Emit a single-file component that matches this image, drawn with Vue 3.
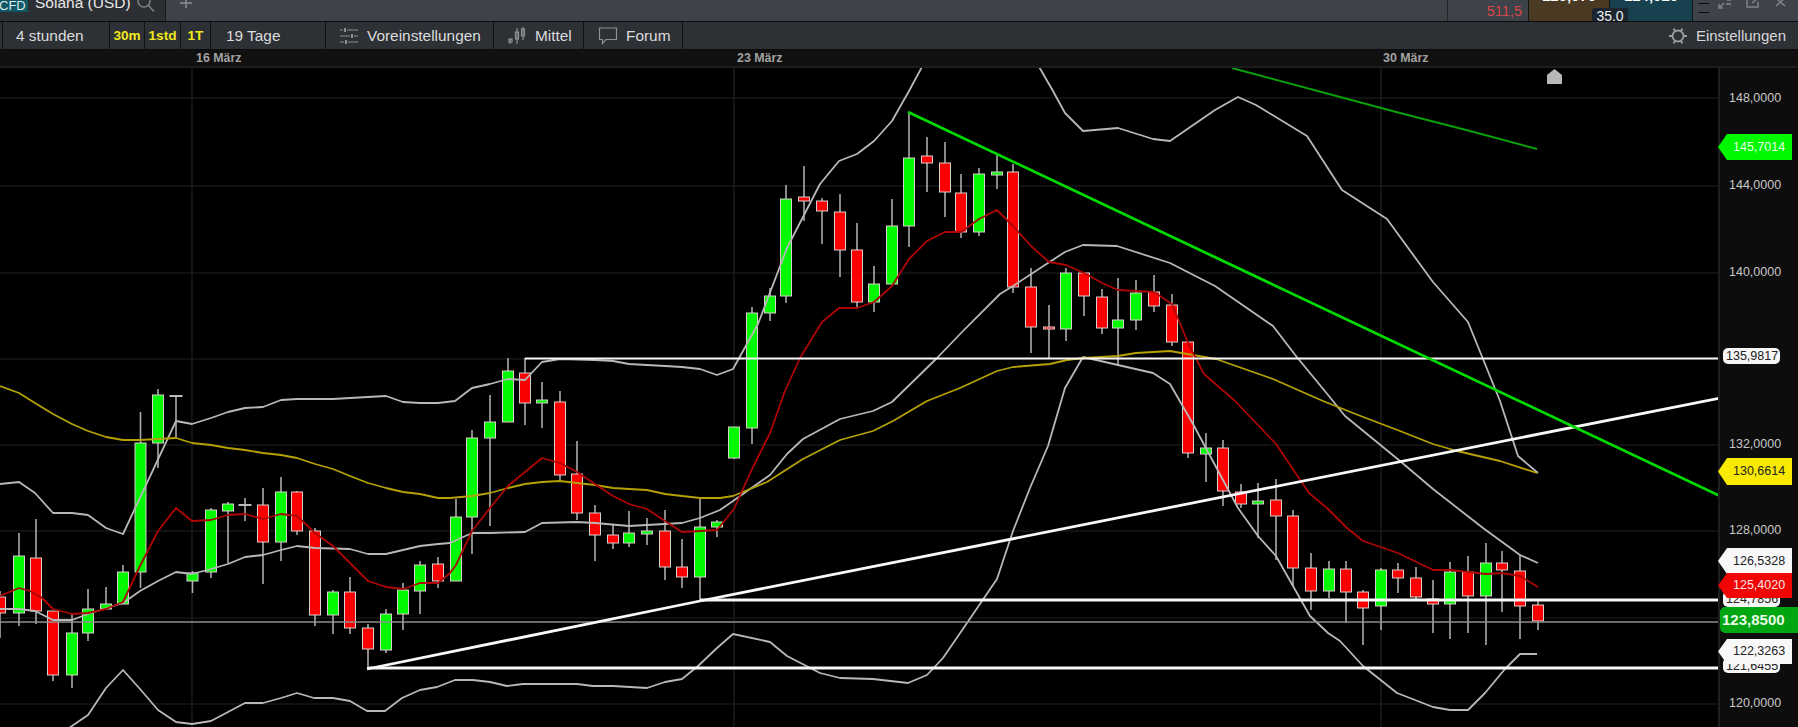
<script setup>
const candleRows = [
  [0,590,637,596,612,'r'],[19,532,625,555,612,'g'],[36,518,623,557,610,'r'],[53,610,680,610,674,'r'],
  [72,613,687,632,674,'g'],[88,588,640,608,632,'g'],[106,586,608,603,608,'g'],[123,564,603,571,603,'g'],
  [140.5,411,587,442,571,'g'],[158,388,467,394,442,'g'],[176,395,437,394.5,395.5,'d'],[192.5,570,592,572,580,'g'],
  [211,507,577,509,571,'g'],[228,501,562,503,510,'g'],[245,497,520,503.5,504.5,'d'],[263,487,583,504,541,'r'],
  [281,476,560,491,541,'g'],[297,490,534,491,530,'r'],[315,527,625,530,614,'r'],[333,589,633,591,614,'g'],
  [350,576,633,591,627,'r'],[368,623,665,627,648,'r'],[386,608,652,613,649,'g'],[403,582,629,589,613,'g'],
  [420,560,613,564,590,'g'],[438,556,587,563,580,'r'],[456,498,580,516,580,'g'],[472,429,553,437,516,'g'],
  [490,394,525,421,437,'g'],[508,357,421,370,421,'g'],[525,357,424,372,402,'r'],[542,381,427,399,402,'g'],
  [560,390,480,401,474,'r'],[577,440,519,473,512,'r'],[595,504,560,512,534,'r'],[613,523,548,534,542,'r'],
  [629,510,546,532,542,'g'],[647,517,544,530,533,'g'],[665,509,579,530,566,'r'],[682,538,587,566,576,'r'],
  [700,497,600,526,576,'g'],[717,519,536,521,526,'g'],[734,426,458,426,457,'g'],[752,306,443,312,427,'g'],
  [770,287,320,295,312,'g'],[786,184,302,198,295,'g'],[804,165,220,196,200,'r'],[822,197,243,200,210,'r'],
  [840,193,276,211,249,'r'],[857,222,308,249,301,'r'],[874,265,311,283,301,'g'],[892,198,283,225,283,'g'],
  [909,112,246,157,225,'g'],[927,136,191,155,162,'r'],[945,141,216,162,191,'r'],[961,173,237,192,231,'r'],
  [979,167,235,173,231,'g'],[997,154,188,171,174,'g'],[1013,163,292,171,286,'r'],[1031,267,352,286,326,'r'],
  [1049,304,357,326,328,'r'],[1066,267,340,272,328,'g'],[1084,272,315,272,295,'r'],[1102,288,333,296,327,'r'],
  [1118,277,365,319,327,'g'],[1136,279,329,292,319,'g'],[1154,274,311,291,305,'r'],[1172,293,345,304,341,'r'],
  [1188,341,457,341,452,'r'],[1206,432,481,447,453,'g'],[1223,439,505,447,490,'r'],[1241,483,507,491,503,'r'],
  [1258,482,537,500,503,'g'],[1276,478,559,499,515,'r'],[1293,509,585,515,567,'r'],[1311,552,609,567,590,'r'],
  [1329,560,597,568,590,'g'],[1346,560,622,568,591,'r'],[1363,589,644,591,607,'r'],[1381,567,629,569,605,'g'],
  [1398,562,592,569,577,'r'],[1416,566,599,577,596,'r'],[1433,579,632,598,603,'r'],[1450,561,638,571,603,'g'],
  [1468,555,632,571,595,'r'],[1486,542,644,562,595,'g'],[1502,550,611,562,569,'r'],[1520,554,638,570,605,'r'],
  [1538,600,629,604,620,'r']
]
const candles = candleRows.map(([x, hi, lo, top, bot, kind]) => ({
  x, hi, lo, kind,
  bodyX: kind === 'd' ? x - 6 : x - 5.5,
  top,
  h: Math.max(bot - top, 1),
  w: kind === 'd' ? 12 : 11
}))

const maLine = '0,595 19,587 30,590 42,597 53,608 72,613 88,612 106,608 123,601 140,565 158,530 176,507 192,520 211,519 228,514 245,513 263,518 281,513 297,515 315,532 333,545 350,562 368,580 386,586 403,588 420,582 438,582 450,572 456,564 472,530 490,507 508,485 525,471 542,457 560,462 577,471 595,483 613,495 629,503 647,508 665,520 682,531 700,530 717,529 734,508 752,468 770,432 785,390 800,357 822,321 839,307 857,307 874,301 892,285 909,258 927,240 945,231 961,231 979,218 997,209 1013,225 1031,245 1049,261 1066,264 1084,272 1102,282 1118,289 1136,290 1154,291 1172,303 1189,344 1204,373 1235,400 1276,443 1309,492 1328,508 1347,527 1363,540 1398,552 1433,569 1450,569 1486,573 1502,572 1520,575 1538,586'
const yellowLine = '0,385 19,392 35,402 53,413 72,423 88,430 106,436 123,439 140,439 158,438 176,437 192,442 211,444 228,447 245,449 263,452 281,454 297,457 315,463 333,468 350,475 368,482 386,487 403,491 420,493 438,497 450,497 472,495 490,492 508,487 525,483 542,481 560,480 577,482 595,484 613,487 629,488 647,489 665,493 682,495 700,497 720,497 733,495 767,481 803,458 840,439 873,430 893,420 927,400 960,387 997,370 1013,366 1050,363 1067,359 1084,357 1118,355 1136,352 1170,350 1216,358 1273,378 1323,400 1358,414 1400,430 1433,443 1457,450 1500,460 1537,472'
const upperBand = '0,483 19,481 35,492 53,512 72,512 88,514 106,527 123,533 176,420 192,423 211,417 228,411 245,407 263,406 281,399 297,398 333,398 350,397 386,395 403,401 420,402 438,402 455,400 472,387 490,383 508,378 525,379 542,361 560,358 595,359 613,360 629,363 665,365 682,366 700,368 717,374 733,368 758,323 787,247 820,183 839,160 857,153 874,140 892,120 909,90 923,64 M1038,64 1053,90 1065,112 1083,130 1118,127 1153,138 1170,140 1215,109 1238,96 1256,104 1307,135 1342,189 1387,218 1433,281 1468,321 1500,400 1518,455 1538,472'
const upperParts = upperBand.split(' M')
const middleBand = '0,608 19,608 35,610 53,619 72,619 88,613 123,602 140,590 158,580 176,571 192,573 211,568 228,563 245,556 263,554 281,549 297,545 315,547 350,548 368,553 386,553 403,549 420,545 438,543 450,542 472,532 490,532 525,531 542,522 577,521 595,522 629,525 647,524 682,522 700,517 720,509 733,500 770,474 787,453 803,438 840,418 873,410 892,401 937,357 963,330 1000,293 1013,285 1048,262 1065,251 1083,244 1117,245 1170,262 1215,285 1273,325 1296,355 1333,400 1345,415 1400,460 1433,488 1483,527 1520,554 1538,562'
const lowerBand = '69,727 88,714 106,687 123,669 140,688 158,709 176,721 192,723 211,720 228,711 245,702 263,702 281,697 297,692 314,697 333,697 350,700 367,710 385,710 402,697 420,689 437,686 455,679 473,679 490,681 507,685 523,683 577,683 593,685 613,685 647,687 665,681 682,678 698,665 717,647 733,633 770,641 787,655 820,672 840,677 873,678 908,682 927,674 943,657 967,622 997,578 1013,530 1030,487 1048,445 1065,387 1083,356 1153,372 1170,383 1193,423 1238,507 1258,535 1276,555 1293,585 1310,615 1328,632 1340,640 1363,665 1397,692 1433,706 1450,709 1468,709 1485,692 1505,668 1520,653 1537,653'

const gridY = [97, 185, 272, 358, 444, 530, 617, 703]
const gridX = [192, 734, 1381]

const axisLabels = [
  { text: '148,0000', y: 97 }, { text: '144,0000', y: 184 }, { text: '140,0000', y: 271 },
  { text: '132,0000', y: 443 }, { text: '128,0000', y: 529 }, { text: '120,0000', y: 702 }
]
const pills = [
  { text: '135,9817', top: 347, h: 16 },
  { text: '124,7856', top: 590, h: 16 },
  { text: '121,6455', top: 657, h: 15 }
]
const tags = [
  { text: '145,7014', top: 133, h: 26, kind: 'lime' },
  { text: '130,6614', top: 457, h: 27, kind: 'yellow' },
  { text: '126,5328', top: 547, h: 26, kind: 'white' },
  { text: '125,4020', top: 572, h: 25, kind: 'red' },
  { text: '122,3263', top: 638, h: 25, kind: 'white' }
]
const axisTop = 67
</script>

<template>
  <div class="page">
    <header class="topbar">
      <div class="instrument">
        <span class="badge">CFD</span>
        <span class="name">Solana (USD)</span>
        <svg class="search" viewBox="0 0 18 12" width="18" height="12">
          <circle cx="7" cy="1" r="6" />
          <path d="M11.5 5.5 17 11.5" />
        </svg>
      </div>
      <div class="newtab">
        <svg viewBox="0 0 14 10" width="14" height="10"><path d="M7 -2V8M1 3H13" /></svg>
      </div>
      <div class="top-space"></div>
      <div class="change">511,5</div>
      <div class="quote sell"><span>126,070</span></div>
      <div class="quote buy"><span>124,020</span></div>
      <div class="spread">35,0</div>
      <div class="grip"><i></i><i></i></div>
      <svg class="win" viewBox="0 0 70 9" width="70" height="9">
        <path d="M1 8 6 3M1 4V8H5M9 0 13 0M8 4 13 4" />
        <path d="M29 0V7H40V2M34 3 40 -2" />
        <path d="M58 -2 67 6M67 -2 58 6" />
      </svg>
    </header>

    <nav class="toolbar">
      <div class="cell edge"></div>
      <div class="cell period">4 stunden</div>
      <div class="cell quick w30">30m</div>
      <div class="cell quick w1s">1std</div>
      <div class="cell quick w1t">1T</div>
      <div class="cell range">19 Tage</div>
      <div class="cell preset">
        <svg viewBox="0 0 18 16" width="18" height="16" class="ic">
          <path d="M0 2H3M7 2H18M0 8H10M14 8H18M0 14H4M8 14H18" />
          <path class="knob" d="M5 0V4M12 6V10M6 12V16" />
        </svg>
        Voreinstellungen
      </div>
      <div class="cell mean">
        <svg viewBox="0 0 18 18" width="18" height="18" class="ic">
          <path d="M2 12V17M9 1V17M15 0V13" />
          <rect x="1" y="12" width="3" height="3" />
          <rect x="7.5" y="5" width="3" height="7" />
          <rect x="13.5" y="2" width="3" height="7" />
        </svg>
        Mittel
      </div>
      <div class="cell forum">
        <svg viewBox="0 0 20 18" width="20" height="18" class="ic">
          <path d="M1.5 1H18.5V12.5H8L4.5 16.5V12.5H1.5Z" />
        </svg>
        Forum
      </div>
      <div class="tool-space"></div>
      <div class="settings">
        <svg viewBox="0 0 18 18" width="18" height="18" class="gear">
          <circle cx="9" cy="9" r="5.5" />
          <path d="M0 9H3.5M14.5 9H18M4.5 1.5 6.2 4.3M13.5 1.5 11.8 4.3M4.5 16.5 6.2 13.7M13.5 16.5 11.8 13.7" />
        </svg>
        Einstellungen
      </div>
    </nav>

    <div class="dates">
      <span class="date d1">16 März</span>
      <span class="date d2">23 März</span>
      <span class="date">30 März</span>
    </div>

    <section class="chart">
      <svg class="plot" viewBox="0 67 1720 660" width="1720" height="660">
        <g class="grid">
          <line v-for="y in gridY" :key="'h' + y" x1="0" x2="1720" :y1="y" :y2="y" />
          <line v-for="x in gridX" :key="'v' + x" :x1="x" :x2="x" y1="67" y2="727" />
        </g>
        <g v-for="c in candles" :key="c.x" :class="['candle', c.kind]">
          <line class="wick" :x1="c.x" :x2="c.x" :y1="c.hi" :y2="c.lo" />
          <rect class="body" :x="c.bodyX" :y="c.top" :width="c.w" :height="c.h" />
        </g>
        <polyline class="band" :points="upperParts[0]" />
        <polyline class="band" :points="upperParts[1]" />
        <polyline class="band" :points="middleBand" />
        <polyline class="band" :points="lowerBand" />
        <polyline class="yellow" :points="yellowLine" />
        <polyline class="ma" :points="maLine" />
        <line class="price" x1="0" x2="1720" y1="621" y2="621" />
        <line class="level thin" x1="525" x2="1720" y1="357.5" y2="357.5" />
        <line class="level" x1="700" x2="1720" y1="599" y2="599" />
        <line class="level" x1="367" x2="1720" y1="667" y2="667" />
        <line class="level" x1="367" y1="668" x2="700" y2="600" />
        <line class="level" x1="700" y1="600" x2="1720" y2="397" />
        <line class="trend" x1="908" y1="111" x2="1720" y2="495" />
        <polyline class="trend-dim" points="1232,67 1400,112 1470,130 1537,148" />
        <polygon class="marker" points="1554.5,68 1562,74 1562,83 1547,83 1547,74" />
      </svg>

      <aside class="axis">
        <span
          v-for="a in axisLabels"
          :key="a.text"
          class="tick"
          :style="{ top: a.y - axisTop - 8 + 'px' }"
        >{{ a.text }}</span>
        <span
          v-for="p in pills"
          :key="p.text"
          class="pill"
          :style="{ top: p.top - axisTop + 'px', height: p.h + 'px' }"
        >{{ p.text }}</span>
        <span
          v-for="t in tags"
          :key="t.text"
          :class="['tag', t.kind]"
          :style="{ top: t.top - axisTop + 'px', height: t.h + 'px', lineHeight: t.h + 'px' }"
        >{{ t.text }}</span>
        <span class="current">123,8500</span>
      </aside>
    </section>
  </div>
</template>

<style scoped>
.page {
  width: 1798px;
  height: 727px;
  overflow: hidden;
  background: #000;
  font-family: "Liberation Sans", Arial, sans-serif;
  color: #ddd;
}

/* top bar */
.topbar {
  position: relative;
  display: flex;
  height: 21px;
  background: #3e4249;
  border-bottom: 1px solid #0c0c0c;
  overflow: hidden;
}
.instrument {
  display: flex;
  align-items: flex-start;
  width: 165px;
  background: #2c2f33;
  border-right: 1px solid #15171a;
  overflow: hidden;
}
.badge {
  width: 28px;
  height: 12px;
  flex: none;
  background: #0e5965;
  color: #dfe8ea;
  font-size: 13px;
  line-height: 12px;
  text-indent: -1px;
  overflow: hidden;
}
.name {
  margin: -6px 0 0 7px;
  font-size: 15.5px;
  line-height: 18px;
  color: #e8e8e8;
  white-space: nowrap;
}
.search { margin-left: 6px; flex: none; }
.search circle, .search path { fill: none; stroke: #7f8388; stroke-width: 1.5; }
.newtab { width: 40px; display: flex; padding-left: 13px; box-sizing: border-box; }
.newtab svg path { fill: none; stroke: #8b8f95; stroke-width: 1.5; }
.top-space { flex: 1; }
.change {
  width: 81px;
  box-sizing: border-box;
  border-left: 1px solid #22252a;
  text-align: right;
  padding: 3px 6px 0 0;
  font-size: 14.5px;
  line-height: 17px;
  color: #d8464b;
}
.quote {
  height: 21px;
  font-size: 15px;
  font-weight: 700;
  color: #fff;
  text-align: center;
  box-sizing: border-box;
  border-left: 1px solid #15171a;
}
.quote span { display: block; margin-top: -13px; line-height: 18px; }
.sell { width: 81px; background: #4a3a24; }
.buy { width: 83px; background: #17414e; }
.spread {
  position: absolute;
  left: 1592px;
  top: 8px;
  width: 36px;
  height: 14px;
  background: #1c2430;
  border-radius: 3px 3px 0 0;
  color: #eee;
  font-size: 14px;
  line-height: 16px;
  text-align: center;
}
.grip {
  width: 26px;
  box-sizing: border-box;
  border-left: 1px solid #15171a;
  padding: 3px 0 0 5px;
}
.grip i { display: block; width: 11px; height: 1px; background: #0e0e0e; margin-bottom: 8px; }
.win { flex: none; margin-right: 10px; }
.win path { fill: none; stroke: #83878c; stroke-width: 1.4; }

/* tool bar */
.toolbar {
  display: flex;
  height: 27px;
  background: #2d3035;
  border-bottom: 1px solid #0c0c0c;
  color: #dcdcdc;
  font-size: 15.4px;
  line-height: 27px;
}
.cell {
  display: flex;
  align-items: center;
  box-sizing: border-box;
  border-right: 1px solid #121315;
  white-space: nowrap;
}
.edge { width: 3px; }
.period { width: 107px; padding-left: 13px; }
.quick {
  justify-content: center;
  font-size: 13.6px;
  font-weight: 700;
  color: #f2ea1d;
}
.w30 { width: 35px; }
.w1s { width: 36px; }
.w1t { width: 30px; }
.range { width: 115px; padding-left: 15px; }
.preset { width: 168px; padding-left: 14px; gap: 9px; }
.mean { width: 90px; padding-left: 14px; gap: 9px; }
.forum { width: 99px; padding-left: 14px; gap: 8px; }
.ic { flex: none; }
.ic path, .ic rect { fill: none; stroke: #8c9095; stroke-width: 1.2; }
.ic .knob { stroke-width: 2; }
.tool-space { flex: 1; }
.settings {
  display: flex;
  align-items: center;
  gap: 9px;
  padding-right: 12px;
  color: #d8d8d8;
  font-size: 15px;
}
.gear circle, .gear path { fill: none; stroke: #9a9da1; stroke-width: 1.8; }

/* date row */
.dates {
  display: flex;
  height: 16px;
  padding-left: 196px;
  background: #101010;
  border-bottom: 2px solid #1d1d1d;
  font-size: 12.4px;
  font-weight: 700;
  line-height: 17px;
  color: #a2a2a2;
}
.date { white-space: nowrap; }
.d1 { width: 541px; }
.d2 { width: 646px; }

/* chart */
.chart { display: flex; height: 660px; }
.plot { flex: none; display: block; background: #000; }
.grid line { stroke: #232323; stroke-width: 1.2; }
.wick { stroke: #ababab; stroke-width: 1.6; }
.body { stroke: #d9cfcf; stroke-width: 1; }
.g .body { fill: #00f800; }
.r .body { fill: #fa0000; }
.d .body { fill: #bbb; stroke: #bbb; }
polyline { fill: none; stroke-linejoin: round; }
.band { stroke: #b8b8b8; stroke-width: 1.8; }
.yellow { stroke: #b5a106; stroke-width: 1.8; }
.ma { stroke: #ad0505; stroke-width: 1.8; }
.price { stroke: #8f8f8f; stroke-width: 1.5; }
.level { stroke: #f8f8f8; stroke-width: 2.8; }
.level.thin { stroke-width: 1.8; }
.trend { stroke: #00d800; stroke-width: 2.8; }
.trend-dim { stroke: #0aa00a; stroke-width: 2; }
.marker { fill: #b8b8b8; }

/* axis */
.axis {
  position: relative;
  flex: 1;
  background: #0d0d0d;
  border-left: 2px solid #1e1e1e;
  margin-left: -2px;
  font-size: 12.5px;
}
.tick {
  position: absolute;
  left: 9px;
  line-height: 16px;
  color: #c8c8c8;
  white-space: nowrap;
}
.pill {
  position: absolute;
  left: 3px;
  width: 57px;
  box-sizing: border-box;
  padding-left: 3px;
  background: #f6f6f6;
  border-radius: 5px;
  color: #222;
  line-height: 16px;
  white-space: nowrap;
}
.tag {
  position: absolute;
  left: -2px;
  width: 74px;
  box-sizing: border-box;
  padding-left: 15px;
  clip-path: polygon(9px 0, 100% 0, 100% 100%, 9px 100%, 0 50%);
  white-space: nowrap;
}
.lime { background: #00f800; color: #e6ffe6; }
.yellow.tag { background: #f8ea00; color: #222; }
.white { background: #f8f8f8; color: #222; }
.red { background: #f00505; color: #f8e4e4; }
.current {
  position: absolute;
  left: 0;
  top: 539px;
  width: 78px;
  height: 26px;
  box-sizing: border-box;
  padding-left: 2px;
  border-radius: 5px 0 0 5px;
  background: #00a612;
  color: #eafbe8;
  font-size: 15px;
  font-weight: 700;
  line-height: 26px;
  white-space: nowrap;
}
</style>
